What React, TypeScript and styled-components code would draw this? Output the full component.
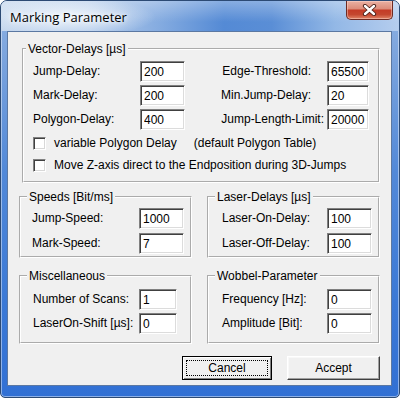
import React from "react";
import styled, { createGlobalStyle } from "styled-components";

const GlobalStyle = createGlobalStyle`
  html, body {
    margin: 0;
    padding: 0;
    background: #ffffff;
  }
  body {
    font-family: "Liberation Sans", Arial, sans-serif;
    font-size: 12px;
    color: #000;
  }
`;

// window frame (aero-ish blue glass)
const Window = styled.div`
  width: 400px;
  height: 398px;
  box-sizing: border-box;
  display: flex;
  flex-direction: column;
  border: 1px solid #2c4a74;
  border-radius: 7px 7px 5px 5px;
  overflow: hidden;
  background: linear-gradient(
    180deg,
    #8fb2e2 0px,
    #7aa3dd 60px,
    #5289d8 170px,
    #3b79d6 300px,
    #3170d4 398px
  );
  box-shadow: inset 0 0 0 1px rgba(255, 255, 255, 0.45);
`;

const TitleBar = styled.div`
  height: 30px;
  flex: none;
  display: flex;
  align-items: center;
  justify-content: space-between;
  padding-left: 9px;
  background:
    linear-gradient(180deg, rgba(255, 255, 255, 0.3) 0%, rgba(255, 255, 255, 0) 70%),
    radial-gradient(ellipse 90px 20px at 65px 16px, rgba(240, 246, 252, 0.95) 0%, rgba(240, 246, 252, 0) 100%),
    linear-gradient(
      90deg,
      #c4d6ed 0%,
      #b3cbea 22%,
      #84abe0 40%,
      #548ad5 56%,
      #5a8ed6 68%,
      #93b8e6 84%,
      #b5cdee 100%
    );
`;

const Title = styled.span`
  font-family: "Open Sans", "Liberation Sans", sans-serif;
  font-size: 13px;
  color: #000;
  margin-top: 1px;
  text-shadow: 0 0 4px #fff, 0 0 8px #fff;
`;

const CloseButton = styled.div`
  align-self: flex-start;
  width: 47px;
  height: 19px;
  margin-right: 6px;
  box-sizing: border-box;
  display: flex;
  align-items: center;
  justify-content: center;
  border: 1px solid #6e2a22;
  border-top: none;
  border-radius: 0 0 5px 5px;
  background: linear-gradient(
    180deg,
    #eab1a3 0%,
    #dd8d7b 42%,
    #c43c27 52%,
    #c4472f 75%,
    #e08467 100%
  );
  box-shadow: inset 0 0 0 1px rgba(255, 220, 210, 0.45);
`;

const Client = styled.div`
  flex: 1;
  margin: 0 7px 11px 6px;
  border: 1px solid #5b78a2;
  background: #f0f0f0;
  padding: 0 11px;
  display: flex;
  flex-direction: column;
`;

const Group = styled.fieldset<{ $inset?: boolean }>`
  margin: 0;
  padding: 0;
  min-width: 0;
  border: 2px groove #ffffff;
  ${(p) => (p.$inset ? "margin: 10px 0 0 3px;" : "")}
`;

const Legend = styled.legend<{ $shift: number }>`
  padding: 0 2px;
  margin-left: ${(p) => p.$shift}px;
  font-size: 12px;
  line-height: 14px;
  white-space: nowrap;
`;

const GroupBody = styled.div<{ $pad: string }>`
  padding: ${(p) => p.$pad};
`;

const VectorGrid = styled.div`
  display: grid;
  grid-template-columns: 107px 45px 1fr 42px;
  grid-auto-rows: 21px;
  row-gap: 3px;
  align-items: center;
`;

const PairGrid = styled.div<{ $input: number; $gap: number }>`
  display: grid;
  grid-template-columns: 1fr ${(p) => p.$input}px;
  grid-auto-rows: 21px;
  row-gap: ${(p) => p.$gap}px;
  align-items: center;
`;

const Label = styled.span<{ $right?: number }>`
  white-space: nowrap;
  line-height: 21px;
  ${(p) =>
    p.$right !== undefined
      ? `text-align: right; padding-right: ${p.$right}px;`
      : ""}
`;

const Field = styled.input`
  box-sizing: border-box;
  width: 100%;
  height: 21px;
  margin: 0;
  padding: 0 3px;
  border: 1px solid;
  border-color: #808080 #ffffff #ffffff #808080;
  box-shadow: inset 1px 1px 0 #404040, inset -1px -1px 0 #dcdcdc;
  background: #fff;
  font-family: "Liberation Sans", Arial, sans-serif;
  font-size: 12px;
  color: #000;
  outline: none;
`;

const CheckList = styled.div`
  display: flex;
  flex-direction: column;
  gap: 4px;
  margin-top: 4px;
`;

const CheckRow = styled.label`
  display: flex;
  align-items: center;
  height: 18px;
  gap: 8px;
  white-space: nowrap;
`;

const CheckBox = styled.input`
  appearance: none;
  margin: 0;
  width: 13px;
  height: 13px;
  box-sizing: border-box;
  border: 1px solid;
  border-color: #808080 #ffffff #ffffff #808080;
  box-shadow: inset 1px 1px 0 #404040, inset -1px -1px 0 #d8d8d8;
  background: #fff;
`;

const Note = styled.span`
  margin-left: 9px;
`;

const Split = styled.div<{ $top: number }>`
  display: grid;
  grid-template-columns: 1fr 1fr;
  column-gap: 15px;
  margin-top: ${(p) => p.$top}px;
`;

const ButtonRow = styled.div`
  display: flex;
  justify-content: flex-end;
  gap: 15px;
  margin-top: 12px;
`;

const Button = styled.button<{ $width: number; $focus?: boolean }>`
  width: ${(p) => p.$width}px;
  height: 24px;
  margin: 0;
  padding: 0;
  font-family: "Liberation Sans", Arial, sans-serif;
  font-size: 12px;
  color: #000;
  background: #f0f0f0;
  border: 1px solid;
  border-color: ${(p) =>
    p.$focus ? "#000" : "#ffffff #404040 #404040 #ffffff"};
  box-shadow: ${(p) =>
    p.$focus
      ? "inset 1px 1px 0 #fff, inset -1px -1px 0 #808080"
      : "inset -1px -1px 0 #a0a0a0, inset 1px 1px 0 #f8f8f8"};
  ${(p) => (p.$focus ? "outline: 1px dotted #000; outline-offset: -5px;" : "")}
`;

const CloseGlyph = () => (
  <svg width="15" height="12" viewBox="0 0 15 12">
    <path
      d="M3 2 L12 10 M12 2 L3 10"
      stroke="#4a2018"
      strokeWidth="4.2"
      strokeLinecap="round"
    />
    <path
      d="M3 2 L12 10 M12 2 L3 10"
      stroke="#ffffff"
      strokeWidth="2.4"
      strokeLinecap="round"
    />
  </svg>
);

const vectorRows = [
  ["Jump-Delay:", "200", "Edge-Threshold:", "65500", 16],
  ["Mark-Delay:", "200", "Min.Jump-Delay:", "20", 16],
  ["Polygon-Delay:", "400", "Jump-Length-Limit:", "20000", 3],
] as const;

type Pair = { label: string; value: string };

const PairGroup: React.FC<{
  title: string;
  shift: number;
  pad: string;
  input: number;
  gap: number;
  rows: Pair[];
}> = ({ title, shift, pad, input, gap, rows }) => (
  <Group>
    <Legend $shift={shift}>{title}</Legend>
    <GroupBody $pad={pad}>
      <PairGrid $input={input} $gap={gap}>
        {rows.map((r) => (
          <React.Fragment key={r.label}>
            <Label>{r.label}</Label>
            <Field readOnly defaultValue={r.value} />
          </React.Fragment>
        ))}
      </PairGrid>
    </GroupBody>
  </Group>
);

export default function App() {
  return (
    <>
      <GlobalStyle />
      <Window>
        <TitleBar>
          <Title>Marking Parameter</Title>
          <CloseButton>
            <CloseGlyph />
          </CloseButton>
        </TitleBar>

        <Client>
          <Group $inset>
            <Legend $shift={2}>Vector-Delays [µs]</Legend>
            <GroupBody $pad="5px 9px 7px 9px">
              <VectorGrid>
                {vectorRows.map(([l1, v1, l2, v2, gap]) => (
                  <React.Fragment key={l1}>
                    <Label>{l1}</Label>
                    <Field readOnly defaultValue={v1} />
                    <Label $right={gap}>{l2}</Label>
                    <Field readOnly defaultValue={v2} />
                  </React.Fragment>
                ))}
              </VectorGrid>
              <CheckList>
                <CheckRow>
                  <CheckBox type="checkbox" />
                  <span>variable Polygon Delay</span>
                  <Note>(default Polygon Table)</Note>
                </CheckRow>
                <CheckRow>
                  <CheckBox type="checkbox" />
                  <span>Move Z-axis direct to the Endposition during 3D-Jumps</span>
                </CheckRow>
              </CheckList>
            </GroupBody>
          </Group>

          <Split $top={7}>
            <PairGroup
              title="Speeds [Bit/ms]"
              shift={6}
              pad="4px 6px 2px 11px"
              input={45}
              gap={4}
              rows={[
                { label: "Jump-Speed:", value: "1000" },
                { label: "Mark-Speed:", value: "7" },
              ]}
            />
            <PairGroup
              title="Laser-Delays [µs]"
              shift={6}
              pad="4px 6px 2px 13px"
              input={45}
              gap={4}
              rows={[
                { label: "Laser-On-Delay:", value: "100" },
                { label: "Laser-Off-Delay:", value: "100" },
              ]}
            />
          </Split>

          <Split $top={11}>
            <PairGroup
              title="Miscellaneous"
              shift={6}
              pad="6px 13px 8px 12px"
              input={38}
              gap={3}
              rows={[
                { label: "Number of Scans:", value: "1" },
                { label: "LaserOn-Shift [µs]:", value: "0" },
              ]}
            />
            <PairGroup
              title="Wobbel-Parameter"
              shift={6}
              pad="6px 6px 8px 13px"
              input={45}
              gap={3}
              rows={[
                { label: "Frequency [Hz]:", value: "0" },
                { label: "Amplitude [Bit]:", value: "0" },
              ]}
            />
          </Split>

          <ButtonRow>
            <Button $width={90} $focus>
              Cancel
            </Button>
            <Button $width={93}>Accept</Button>
          </ButtonRow>
        </Client>
      </Window>
    </>
  );
}
